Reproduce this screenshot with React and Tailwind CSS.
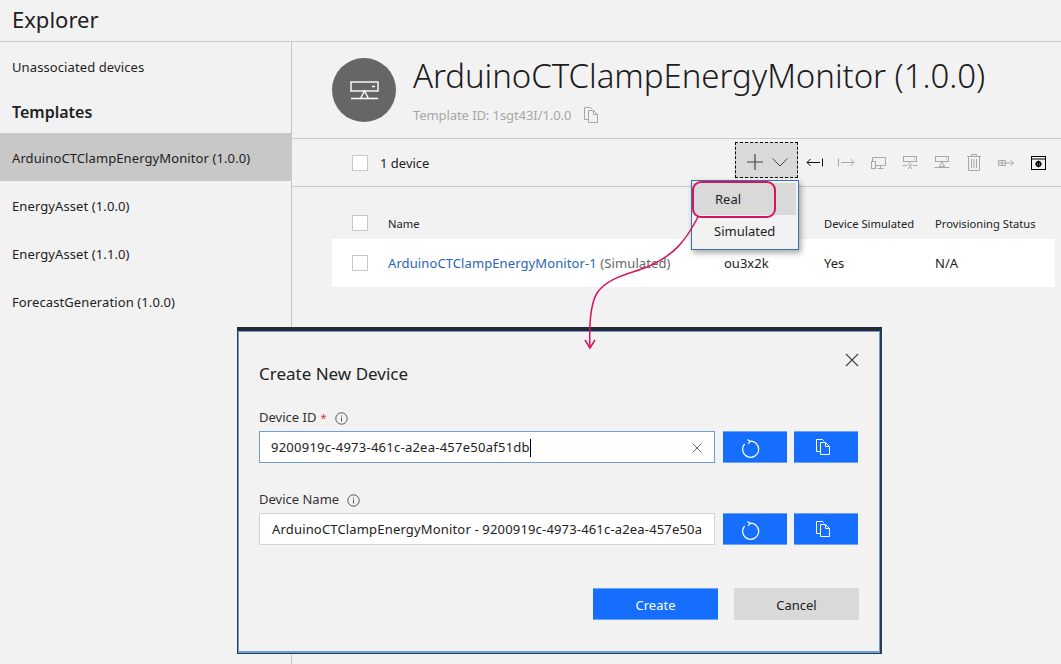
import React from 'react';

const CopyIcon = ({ className }) => (
  <svg width="14" height="16" viewBox="0 0 14 16" fill="none" stroke="currentColor" strokeWidth="1" className={className}>
    <path d="M5 12.5H0.5V0.5H6.5L8 2" />
    <path d="M4.5 3.5H9.5L13.5 7.5V15.5H4.5Z" />
    <path d="M9.5 3.5V7.5H13.5" />
  </svg>
);

const RefreshIcon = () => (
  <svg width="18" height="19" viewBox="0 0 18 19" fill="none" stroke="white" strokeWidth="1.2" className="mr-[8px] mt-[3px]">
    <path d="M7 2.4 A8 8 0 1 1 2.6 5" />
    <path d="M5.5 0.5 L8 2.5 L6 5" />
  </svg>
);

const InfoIcon = () => (
  <svg width="13" height="13" viewBox="0 0 13 13" fill="none" stroke="#555" strokeWidth="1">
    <circle cx="6.5" cy="6.5" r="5.7" />
    <path d="M6.5 5.5V9.5M6.5 3.5V4.5" />
  </svg>
);

const Check = () => <div className="w-[16px] h-[16px] shrink-0 bg-white border border-[#c8c8c8]" />;

function ToolIcon({ children }) {
  return <div className="w-[32px] h-full flex items-center justify-center">{children}</div>;
}

const GREY = '#a8a8a8';

function Toolbar() {
  return (
    <div className="h-[48px] border-b border-[#c8c8c8] pl-[60px] pr-[7px] flex items-center">
      <Check />
      <span className="ml-[12px] pt-[2px] text-[13px]">1 device</span>
      <div className="ml-auto flex items-center h-full">
        <div className="w-[63px] h-[36px] -mt-[6px] border border-dashed border-black bg-[#d9d9d9] flex items-center">
          <svg width="18" height="18" viewBox="0 0 18 18" fill="none" stroke="#444" strokeWidth="1.2" className="ml-[10px] mt-[5px]">
            <path d="M9 1V17M1 9H17" />
          </svg>
          <svg width="16" height="9" viewBox="0 0 16 9" fill="none" stroke="#444" strokeWidth="1" className="ml-[8px] mt-[5px]">
            <path d="M0.5 0.5L8 8L15.5 0.5" />
          </svg>
        </div>
        <ToolIcon>
          <svg width="17" height="9" viewBox="0 0 17 9" fill="none" stroke="#111" strokeWidth="1">
            <path d="M16.5 0.5V8.5M14 4.5H1M4.5 1L1 4.5L4.5 8" />
          </svg>
        </ToolIcon>
        <ToolIcon>
          <svg width="17" height="9" viewBox="0 0 17 9" fill="none" stroke={GREY} strokeWidth="1">
            <path d="M0.5 0.5V8.5M3 4.5H16M12.5 1L16 4.5L12.5 8" />
          </svg>
        </ToolIcon>
        <ToolIcon>
          <svg width="15" height="12" viewBox="0 0 15 12" fill="none" stroke={GREY} strokeWidth="1">
            <path d="M1.5 4V0.5H14.5V8.5H5M9.5 8.5V11.5M6.5 11.5H12.5" />
            <rect x="0.5" y="4.5" width="4" height="7" />
          </svg>
        </ToolIcon>
        <ToolIcon>
          <svg width="16" height="14" viewBox="0 0 16 14" fill="none" stroke={GREY} strokeWidth="1">
            <rect x="1.5" y="0.5" width="13" height="5" />
            <path d="M12 3h1M8 5.5V8M0.5 9.5H5M11 9.5H15.5M6 8L10 13M10 8L6 13" />
          </svg>
        </ToolIcon>
        <ToolIcon>
          <svg width="16" height="13" viewBox="0 0 16 13" fill="none" stroke={GREY} strokeWidth="1">
            <rect x="1.5" y="0.5" width="13" height="5" />
            <path d="M12 3h1M8 5.5L5.5 10.5H10.5ZM0.5 11.5H15.5" />
          </svg>
        </ToolIcon>
        <ToolIcon>
          <svg width="14" height="17" viewBox="0 0 14 17" fill="none" stroke={GREY} strokeWidth="1">
            <path d="M0 2.5H14M4.5 2.5V0.5H9.5V2.5M1.5 2.5V16.5H12.5V2.5M4.5 5V14M7 5V14M9.5 5V14" />
          </svg>
        </ToolIcon>
        <ToolIcon>
          <svg width="16" height="8" viewBox="0 0 16 8" fill="none" stroke={GREY} strokeWidth="1">
            <path d="M0.5 1.5H7.5V6.5H0.5ZM4 1.5V6.5M0.5 4H7.5M8 4H15.5M12.5 1L15.5 4L12.5 7" />
          </svg>
        </ToolIcon>
        <ToolIcon>
          <svg width="15" height="14" viewBox="0 0 15 14" fill="none" stroke="#000" strokeWidth="1">
            <rect x="0.5" y="0.5" width="14" height="13" />
            <path d="M0.5 3H14.5" />
            <circle cx="7.5" cy="8" r="2.2" strokeWidth="1.4" />
            <path d="M7.5 4.6V11.4M4.1 8H10.9" strokeWidth="1" />
          </svg>
        </ToolIcon>
      </div>
    </div>
  );
}

function Sidebar() {
  const items = ['EnergyAsset (1.0.0)', 'EnergyAsset (1.1.0)', 'ForecastGeneration (1.0.0)'];
  return (
    <div className="w-[292px] shrink-0 border-r border-[#c8c8c8] text-[13px] tracking-[0.1px]">
      <div className="h-[50px] pl-[12px] pt-[2px] flex items-center">Unassociated devices</div>
      <div className="h-[41px] pl-[12px] flex items-center text-[16px] font-semibold tracking-normal -mt-[1px] mb-[1px]">Templates</div>
      <div className="h-[48px] pl-[12px] pt-[3px] flex items-center bg-[#c8c8c8]">ArduinoCTClampEnergyMonitor (1.0.0)</div>
      {items.map((name) => (
        <div key={name} className="h-[48px] pl-[12px] pt-[3px] flex items-center">{name}</div>
      ))}
    </div>
  );
}

function DeviceTable() {
  return (
    <div className="pl-[40px] pr-[6px]">
      <div className="h-[52px] pl-[20px] pt-[28px] flex items-start text-[11.2px] leading-[18px]">
        <Check />
        <span className="ml-[20px] w-[336px]">Name</span>
        <span className="w-[100px]" />
        <span className="w-[111px]">Device Simulated</span>
        <span>Provisioning Status</span>
      </div>
      <div className="h-[48px] pl-[20px] bg-white flex items-center text-[13px]">
        <Check />
        <span className="ml-[20px] pt-[2px] w-[336px] whitespace-nowrap text-[#2a65b0] tracking-[0.1px]">
          ArduinoCTClampEnergyMonitor-1 <span className="text-[#666]">(Simulated)</span>
        </span>
        <span className="w-[100px] pt-[2px]">ou3x2k</span>
        <span className="w-[111px] pt-[2px]">Yes</span>
        <span className="pt-[2px]">N/A</span>
      </div>
    </div>
  );
}

function FieldButtons() {
  return (
    <div className="flex ml-[8px] gap-[7px]">
      <button className="w-[64px] h-[32px] bg-[#166eff] border-t border-b border-[#6aa2f8] flex items-center justify-center">
        <RefreshIcon />
      </button>
      <button className="w-[64px] h-[32px] bg-[#166eff] border-t border-b border-[#6aa2f8] flex items-center justify-center text-white">
        <CopyIcon className="mr-[6px]" />
      </button>
    </div>
  );
}

function CreateDeviceModal() {
  return (
    <div className="absolute left-[237px] top-[327px] w-[645px] h-[327px] border-t-[4px] border-l border-r-2 border-b border-t-[#26292e] border-x-[#2c3b50] border-b-[#2c3b50]">
      <div className="relative h-full bg-[#f2f2f2] border-t border-x border-b-2 border-[#6f9fd8] pl-[20px] pt-[30px] flex flex-col text-[13px]">
        <svg width="14" height="14" viewBox="0 0 14 14" fill="none" stroke="#444" strokeWidth="1.1" className="absolute right-[20px] top-[21px]">
          <path d="M1 1L13 13M13 1L1 13" />
        </svg>
        <div className="text-[17px] leading-[24px] text-[#222]">Create New Device</div>

        <div className="mt-[22px] h-[18px] pt-[2px] flex items-center text-[#333]">
          Device ID <span className="text-[#d13438] ml-[4px] text-[11px]">*</span>
          <span className="ml-[9px]"><InfoIcon /></span>
        </div>
        <div className="mt-[5px] flex">
          <div className="w-[456px] h-[32px] bg-white border border-[#6f9fd8] pl-[11px] pt-[2px] flex items-center tracking-[0.25px]">
            <span>9200919c-4973-461c-a2ea-457e50af51db</span>
            <span className="w-px h-[18px] bg-black" />
            <svg width="10" height="10" viewBox="0 0 10 10" fill="none" stroke="#666" strokeWidth="1" className="ml-auto mr-[12px]">
              <path d="M0.5 0.5L9.5 9.5M9.5 0.5L0.5 9.5" />
            </svg>
          </div>
          <FieldButtons />
        </div>

        <div className="mt-[27px] h-[18px] pt-[2px] flex items-center text-[#333]">
          Device Name
          <span className="ml-[8px]"><InfoIcon /></span>
        </div>
        <div className="mt-[5px] flex">
          <div className="w-[456px] h-[32px] bg-white border border-[#d4d4d4] pl-[12px] pt-[2px] flex items-center overflow-hidden whitespace-nowrap tracking-[0.17px]">
            ArduinoCTClampEnergyMonitor - 9200919c-4973-461c-a2ea-457e50a
          </div>
          <FieldButtons />
        </div>

        <div className="mt-[43px] flex justify-end gap-[16px] pr-[20px]">
          <button className="w-[125px] h-[32px] pt-[3px] bg-[#166eff] border-t border-b border-[#6aa2f8] text-white">Create</button>
          <button className="w-[125px] h-[32px] pt-[3px] bg-[#d9d9d9] text-[#222]">Cancel</button>
        </div>
      </div>
    </div>
  );
}

export default function App() {
  return (
    <div className="relative w-[1061px] h-[664px] overflow-hidden bg-[#f2f2f2] text-[#222] font-['Noto_Sans','Open_Sans',sans-serif]">
      <div className="h-[42px] border-b border-[#c8c8c8] pl-[12px] pb-[2px] flex items-center text-[22px]">Explorer</div>
      <div className="flex h-[622px]">
        <Sidebar />
        <div className="flex-1 min-w-0">
          <div className="h-[97px] border-b border-[#c8c8c8] pl-[40px] flex items-center gap-[17px]">
            <div className="w-[64px] h-[64px] rounded-full bg-[#666] flex items-center justify-center">
              <svg width="29" height="19" viewBox="0 0 29 19" fill="none" stroke="white" strokeWidth="1.4">
                <rect x="1" y="1" width="27" height="9" />
                <path d="M22 5.5h3M14.5 10L10.5 17.5H18.5ZM1 17.5H28" />
              </svg>
            </div>
            <div>
              <div className="text-[33px] leading-[40px] font-light text-[#1c1c1c] tracking-[-0.06px]">ArduinoCTClampEnergyMonitor (1.0.0)</div>
              <div className="mt-[9px] flex items-center text-[#a6a6a6] text-[13px] leading-[20px] tracking-[-0.08px]">
                Template ID: 1sgt43I/1.0.0
                <CopyIcon className="ml-[13px]" />
              </div>
            </div>
          </div>
          <Toolbar />
          <DeviceTable />
        </div>
      </div>

      <div className="absolute left-[691px] top-[180px] w-[108px] h-[70px] bg-[#f2f2f2] border border-[#3a6fb5] shadow-[2px_3px_6px_rgba(0,0,0,0.35)] text-[13px] pt-[2px]">
        <div className="h-[32px] mr-[2px] bg-[#d9d9d9] pl-[23px] pt-[2px] flex items-center">Real</div>
        <div className="h-[32px] pl-[22px] pt-[2px] flex items-center">Simulated</div>
      </div>
      <div className="absolute left-[692px] top-[181px] w-[84px] h-[37px] rounded-[9px] border-2 border-[#d5145f]" />

      <CreateDeviceModal />

      <svg width="1061" height="664" viewBox="0 0 1061 664" fill="none" stroke="#d5145f" strokeWidth="1.5" className="absolute left-0 top-0 pointer-events-none">
        <path d="M698 217C686 240 675 255 647 267C630 274 608 277 597 293C590 305 589 325 590 348" />
        <path d="M585 340L590 348L595 340" />
      </svg>
    </div>
  );
}
